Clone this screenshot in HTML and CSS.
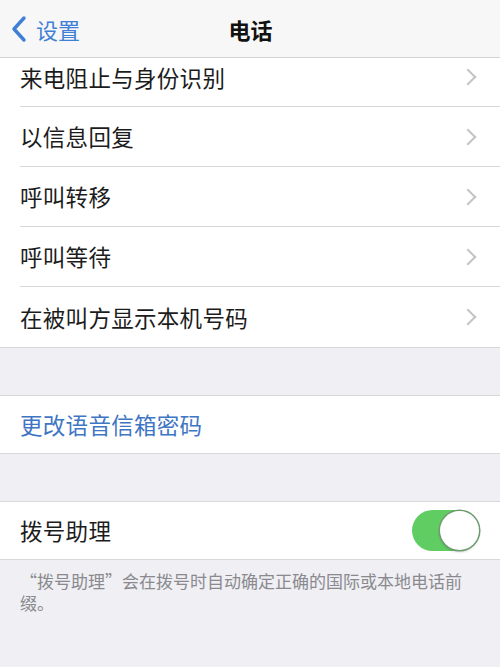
FILE: index.html
```html
<!DOCTYPE html>
<html lang="zh-Hans">
<head>
<meta charset="utf-8">
<link rel="stylesheet" href="styles.css">
</head>
<body>
<div class="screen">
  <header class="nav">
    <div class="back">
      <svg class="back-icon" width="16" height="28" viewBox="0 0 16 28"><path d="M13 3 L3 14 L13 25" fill="none" stroke="#3f7fd6" stroke-width="3.4" stroke-linecap="round" stroke-linejoin="round"/></svg>
      <span class="back-text">设置</span>
    </div>
    <div class="title">电话</div>
  </header>

  <section class="group">
    <div class="row row-first"><div class="cell"><span class="label">来电阻止与身份识别</span><span class="chev"></span></div></div>
    <div class="row"><div class="cell"><span class="label">以信息回复</span><span class="chev"></span></div></div>
    <div class="row"><div class="cell"><span class="label">呼叫转移</span><span class="chev"></span></div></div>
    <div class="row"><div class="cell"><span class="label">呼叫等待</span><span class="chev"></span></div></div>
    <div class="row"><div class="cell last"><span class="label">在被叫方显示本机号码</span><span class="chev"></span></div></div>
  </section>

  <div class="gap"></div>

  <section class="group">
    <div class="row row-short"><div class="cell last"><span class="label link">更改语音信箱密码</span></div></div>
  </section>

  <div class="gap"></div>

  <section class="group">
    <div class="row row-short"><div class="cell last"><span class="label">拨号助理</span><span class="toggle"><span class="knob"></span></span></div></div>
  </section>

  <p class="footnote">“拨号助理”会在拨号时自动确定正确的国际或本地电话前缀。</p>
</div>
</body>
</html>
```

FILE: styles.css
```css
html, body {
  margin: 0;
  padding: 0;
}
body {
  background: #efeff4;
  font-family: "Noto Sans CJK SC", "Noto Sans", sans-serif;
  color: #1c1c1c;
}
.screen {
  width: 500px;
  height: 667px;
  overflow: hidden;
  display: flex;
  flex-direction: column;
  background: #efeff4;
}
.nav {
  height: 57px;
  flex: none;
  background: #f7f7f7;
  border-bottom: 1px solid #d3d3d6;
  display: flex;
  align-items: center;
  justify-content: center;
  position: relative;
}
.back {
  position: absolute;
  left: 11px;
  top: 0;
  height: 57px;
  display: flex;
  align-items: center;
  gap: 9px;
}
.back-icon {
  display: block;
  margin-top: 1px;
}
.back-text {
  font-size: 22px;
  color: #3f7fd6;
  line-height: 1;
}
.title {
  font-size: 22px;
  font-weight: 700;
  color: #111;
  line-height: 1;
  padding-left: 1px;
}
.group {
  background: #fff;
  border-bottom: 1px solid #d8d8dc;
}
.gap {
  height: 47px;
  flex: none;
  border-bottom: 1px solid #d8d8dc;
}
.row {
  height: 60px;
  padding-left: 20px;
  display: flex;
}
.row-first {
  height: 49px;
}
.row-first .cell {
  padding-bottom: 10px;
}
.row-short {
  height: 57px;
}
.cell {
  flex: 1;
  display: flex;
  align-items: center;
  justify-content: space-between;
  border-bottom: 1px solid #d8d8dc;
  padding-right: 20px;
  box-sizing: border-box;
}
.cell.last {
  border-bottom: none;
}
.label {
  font-size: 22.5px;
  line-height: 1;
  letter-spacing: 0.3px;
}
.link {
  color: #3f76c4;
}
.chev {
  width: 10px;
  height: 10px;
  border-top: 2px solid #c4c4c8;
  border-right: 2px solid #c4c4c8;
  transform: rotate(45deg);
  margin-right: 6px;
}
.toggle {
  width: 68px;
  height: 41px;
  border-radius: 21px;
  background: #5fcd62;
  display: flex;
  align-items: center;
  justify-content: flex-end;
  margin-right: 0;
  box-sizing: border-box;
  padding-right: 1px;
}
.knob {
  width: 39px;
  height: 39px;
  border-radius: 50%;
  background: #fff;
  box-shadow: 0 0 0 1.5px #6f9a6f, 0 2px 3px rgba(0,0,0,0.2);
}
.footnote {
  margin: 0;
  padding: 10px 30px 0 20px;
  font-size: 17px;
  line-height: 22px;
  color: #8a8a8e;
}
```
